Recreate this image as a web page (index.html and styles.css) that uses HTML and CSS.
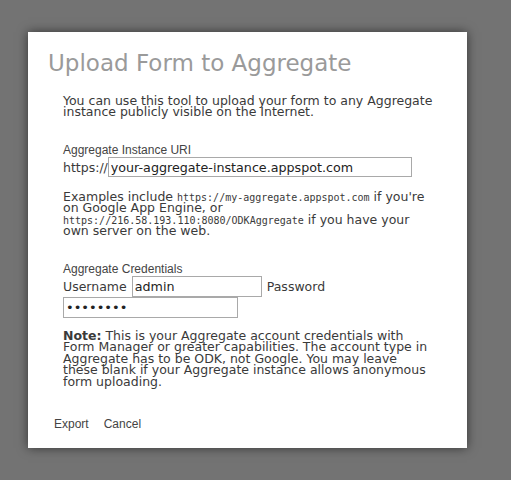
FILE: index.html
```html
<!DOCTYPE html>
<html>
<head>
<meta charset="utf-8">
<link rel="stylesheet" href="styles.css">
</head>
<body>
<div class="dialog">
  <h1 class="title">Upload Form to Aggregate</h1>
  <div class="content">
    <p class="text intro">You can use this tool to upload your form to any Aggregate instance publicly visible on the Internet.</p>
    <div class="label">Aggregate Instance URI</div>
    <div class="url-row">
      <span class="row-text">https://</span><input class="field url-field" type="text" value="your-aggregate-instance.appspot.com">
    </div>
    <p class="text examples">Examples include <code>https://my-aggregate.appspot.com</code> if you're on Google App Engine, or <code>https://216.58.193.110:8080/ODKAggregate</code> if you have your own server on the web.</p>
    <div class="label cred-label">Aggregate Credentials</div>
    <div class="cred-row">
      <span class="row-text">Username</span>
      <input class="field user-field" type="text" value="admin">
      <span class="row-text">Password</span>
      <input class="field pass-field" type="password" value="password">
    </div>
    <p class="text note"><b>Note:</b> This is your Aggregate account credentials with Form Manager or greater capabilities. The account type in Aggregate has to be ODK, not Google. You may leave these blank if your Aggregate instance allows anonymous form uploading.</p>
  </div>
  <div class="actions">
    <button class="btn">Export</button>
    <button class="btn">Cancel</button>
  </div>
</div>
</body>
</html>
```
FILE: styles.css
```css
html, body {
  margin: 0;
  padding: 0;
  background: #737373;
  height: 100%;
}
body {
  padding-top: 32px;
  padding-left: 28px;
  box-sizing: border-box;
}
.dialog {
  width: 439px;
  height: 416px;
  background: #ffffff;
  box-shadow: 0 0 10px rgba(0, 0, 0, 0.55);
  box-sizing: border-box;
  padding: 18px 0 0 20px;
  display: flex;
  flex-direction: column;
}
.title {
  margin: 0;
  font-family: "DejaVu Sans", sans-serif;
  font-weight: normal;
  font-size: 23px;
  color: #9a9a9a;
  line-height: 27px;
}
.content {
  padding-left: 15px;
  width: 372px;
}
.text {
  margin: 0;
  font-family: "DejaVu Sans", sans-serif;
  font-size: 12.5px;
  line-height: 11.5px;
  color: #3a3a3a;
}
.intro {
  margin-top: 17.5px;
}
.label {
  font-family: "Liberation Sans", sans-serif;
  font-size: 12px;
  line-height: 14px;
  color: #444;
  margin-top: 25.5px;
}
.url-row {
  display: flex;
  align-items: center;
}
.row-text {
  font-family: "DejaVu Sans", sans-serif;
  font-size: 12.5px;
  color: #3a3a3a;
}
.field {
  font-family: "DejaVu Sans", sans-serif;
  font-size: 12.7px;
  color: #222;
  border: 1px solid #a9a9a9;
  height: 20px;
  box-sizing: border-box;
  padding: 0 2px;
  margin: 0;
  outline: none;
}
.url-field {
  width: 304px;
}
.examples {
  margin-top: 13.5px;
}
.examples code {
  font-family: "DejaVu Sans Mono", monospace;
  font-size: 10px;
  line-height: 0;
}
.cred-label {
  margin-top: 25.5px;
}
.cred-row {
  display: flex;
  flex-wrap: wrap;
  align-items: center;
  column-gap: 5px;
}
.user-field {
  width: 130px;
  height: 21px;
}
.pass-field {
  width: 175px;
  height: 21px;
  font-size: 13px;
}
.note {
  margin-top: 11.5px;
}
.note b {
  font-weight: bold;
}
.actions {
  margin-top: 29.5px;
  margin-left: 6px;
  display: flex;
  gap: 15px;
}
.btn {
  font-family: "Liberation Sans", sans-serif;
  font-size: 12px;
  color: #444;
  background: none;
  border: none;
  padding: 0;
  line-height: 14px;
}
```
